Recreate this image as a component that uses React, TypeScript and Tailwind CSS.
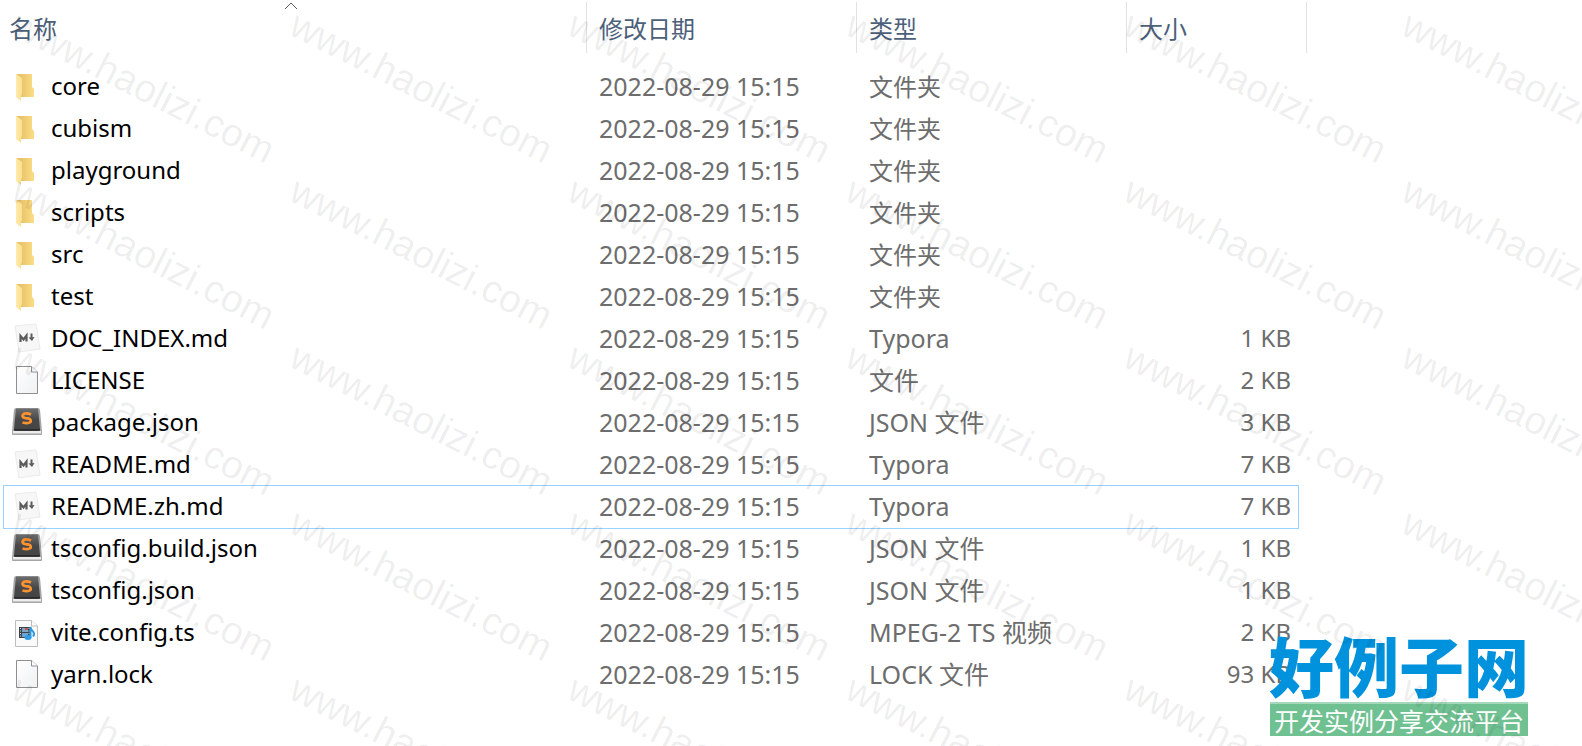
import React, { useState } from 'react';

type Kind = 'folder' | 'markdown' | 'blank' | 'sublime' | 'video';

interface FileEntry {
  name: string;
  kind: Kind;
  date: string;
  type: string;
  size?: string;
}

const DATE = '2022-08-29 15:15';

const FILES: FileEntry[] = [
  { name: 'core', kind: 'folder', date: DATE, type: '文件夹' },
  { name: 'cubism', kind: 'folder', date: DATE, type: '文件夹' },
  { name: 'playground', kind: 'folder', date: DATE, type: '文件夹' },
  { name: 'scripts', kind: 'folder', date: DATE, type: '文件夹' },
  { name: 'src', kind: 'folder', date: DATE, type: '文件夹' },
  { name: 'test', kind: 'folder', date: DATE, type: '文件夹' },
  { name: 'DOC_INDEX.md', kind: 'markdown', date: DATE, type: 'Typora', size: '1 KB' },
  { name: 'LICENSE', kind: 'blank', date: DATE, type: '文件', size: '2 KB' },
  { name: 'package.json', kind: 'sublime', date: DATE, type: 'JSON 文件', size: '3 KB' },
  { name: 'README.md', kind: 'markdown', date: DATE, type: 'Typora', size: '7 KB' },
  { name: 'README.zh.md', kind: 'markdown', date: DATE, type: 'Typora', size: '7 KB' },
  { name: 'tsconfig.build.json', kind: 'sublime', date: DATE, type: 'JSON 文件', size: '1 KB' },
  { name: 'tsconfig.json', kind: 'sublime', date: DATE, type: 'JSON 文件', size: '1 KB' },
  { name: 'vite.config.ts', kind: 'video', date: DATE, type: 'MPEG-2 TS 视频', size: '2 KB' },
  { name: 'yarn.lock', kind: 'blank', date: DATE, type: 'LOCK 文件', size: '93 KB' },
];

const FolderIcon = () => (
  <>
    <path d="M5 3H21V16L23 18V26H10V8Z" fill="url(#folderBack)" />
    <path d="M5 3L11 7V23L10 25V30L5 26Z" fill="url(#folderFront)" />
  </>
);

const PageShape = () => (
  <>
    <path d="M5.5 1.5H20.5L26.5 7V28.5H5.5Z" fill="url(#paper)" stroke="#8f8f8f" />
    <path d="M20.5 1.5V7H26.5" fill="#fff" stroke="#8f8f8f" />
  </>
);

const MarkdownIcon = () => (
  <>
    <path d="M4 3L25 1L29 26L8 29Z" fill="#f7f7f7" stroke="#ebebeb" />
    <path d="M9.5 19V13L12.5 16.5L15.5 12.5V18.5" fill="none" stroke="#5c5c5c" strokeWidth="2.2" />
    <path d="M20.5 10.5V16" fill="none" stroke="#5c5c5c" strokeWidth="2" />
    <path d="M17.5 14.5L23.5 14L21 18Z" fill="#5c5c5c" />
  </>
);

const SublimeIcon = () => (
  <>
    <path d="M5 1H27Q28.5 1 29 3L31 24V27Q31 28 30 28H2Q1 28 1 27V24L3 3Q3.5 1 5 1Z" fill="#a5a5a5" />
    <path d="M2 24H30V26.5H2Z" fill="#ececec" />
    <path d="M5 1.5H27L29 22Q29 24 27.5 24H4.5Q3 24 3 22Z" fill="url(#keycap)" />
    <path d="M3 22H29V23.5H3Z" fill="#2b2b2b" />
    <path
      d="M20 7.5Q16 5.5 13 6.8Q10.5 8.5 12.5 10.5Q14.5 11.5 17.5 11.5Q20.5 12.5 19.5 15Q17 17 11.5 15.5"
      fill="none"
      stroke="#ff922e"
      strokeWidth="2.8"
    />
  </>
);

const VideoIcon = () => (
  <>
    <path d="M4.5 3.5H20.5L26.5 9V29.5H4.5Z" fill="#fafafa" stroke="#bdbdbd" />
    <path d="M20.5 3.5V9H26.5" fill="#fff" stroke="#bdbdbd" />
    <path d="M8 10H19V21H8Z" fill="#3d434b" />
    <path d="M11 11H17V15H11Z" fill="#7fa3c7" />
    <path d="M14 11H17V13H14Z" fill="#c3574c" />
    <path d="M11 16H17V20H11Z" fill="#6aa4d8" />
    <path d="M9.5 11V21M18 11V21" stroke="#d7dce2" strokeDasharray="1 1.5" />
    <ellipse cx="17" cy="20.5" rx="3.5" ry="2.5" fill="#2f9be2" />
    <path d="M19.5 20.5V10Q20 13 22 14.5Q24 17 22 19.5" fill="none" stroke="#2f9be2" strokeWidth="2" />
  </>
);

const ICONS: Record<Kind, React.FC> = {
  folder: FolderIcon,
  blank: PageShape,
  markdown: MarkdownIcon,
  sublime: SublimeIcon,
  video: VideoIcon,
};

const FileIcon = ({ kind }: { kind: Kind }) => {
  const Shape = ICONS[kind];
  return (
    <svg viewBox="0 0 32 32" className="size-8 shrink-0" aria-hidden="true">
      <Shape />
    </svg>
  );
};

// Gradients shared by every file icon
const IconDefs = () => (
  <svg className="absolute size-0" aria-hidden="true">
    <defs>
      <linearGradient id="folderBack">
        <stop offset="0.3" stopColor="#e9c46a" />
        <stop offset="1" stopColor="#fcdd86" />
      </linearGradient>
      <linearGradient id="folderFront">
        <stop offset="0" stopColor="#ffeaa9" />
        <stop offset="1" stopColor="#fbdf90" />
      </linearGradient>
      <linearGradient id="paper" x2="1" y2="1">
        <stop offset="0" stopColor="#ffffff" />
        <stop offset="1" stopColor="#eff1f3" />
      </linearGradient>
      <linearGradient id="keycap" x2="0" y2="1">
        <stop offset="0" stopColor="#6d6d6d" />
        <stop offset="0.5" stopColor="#484848" />
        <stop offset="1" stopColor="#444444" />
      </linearGradient>
    </defs>
  </svg>
);

const Watermark = () => (
  <div className="pointer-events-none absolute inset-0 overflow-hidden" aria-hidden="true">
    <div className="grid w-max grid-cols-[repeat(6,278px)] auto-rows-[166px]">
      {Array.from({ length: 30 }, (_, i) => (
        <div key={i} className="pt-1 pl-6">
          <span className="block w-max origin-top-left rotate-27 font-['Liberation_Sans'] text-[39px] leading-10 text-black/7">
            www.haolizi.com
          </span>
        </div>
      ))}
    </div>
  </div>
);

const SiteLogo = () => (
  <div className="absolute right-[54px] bottom-[10px] w-[258px] font-['Noto_Sans_CJK_SC',sans-serif]">
    <div className="mb-1 flex justify-center text-[65px] leading-[68px] font-black whitespace-nowrap text-[#0092dd]">
      好例子网
    </div>
    <div className="flex h-[34px] justify-center border-t-2 border-[#a5d8bb] bg-[#70c192] text-[25px] leading-8 whitespace-nowrap text-white">
      开发实例分享交流平台
    </div>
  </div>
);

const Separator = ({ last }: { last?: boolean }) => (
  <span
    className={
      last
        ? 'absolute top-0.5 -right-[9px] h-[51px] w-px bg-[#e2e2e2]'
        : 'absolute top-0.5 right-0 h-[51px] w-px bg-[#e2e2e2]'
    }
  />
);

export default function App() {
  const [focused, setFocused] = useState('README.zh.md');

  return (
    <main className="relative min-h-screen overflow-hidden bg-white font-['Noto_Sans','Noto_Sans_CJK_SC',sans-serif]">
      <IconDefs />
      <div className="px-1">
        <table className="w-[1294px] table-fixed border-separate border-spacing-0 text-left">
          <colgroup>
            <col className="w-[583px]" />
            <col className="w-[270px]" />
            <col className="w-[270px]" />
            <col className="w-[171px]" />
          </colgroup>
          <thead>
            <tr className="h-[66px] align-top text-2xl leading-[58px] text-[#4c607a]">
              <th className="relative p-0 pl-[5px] font-normal" aria-sort="ascending">
                名称
                <svg viewBox="0 0 14 8" className="absolute top-0.5 left-[280px] h-2 w-3.5" aria-hidden="true">
                  <path d="M1 7L7 1L13 7" fill="none" stroke="#5a5a5a" />
                </svg>
                <Separator />
              </th>
              <th className="relative p-0 pl-3 font-normal">
                修改日期
                <Separator />
              </th>
              <th className="relative p-0 pl-3 font-normal">
                类型
                <Separator />
              </th>
              <th className="relative p-0 pl-3 font-normal">
                大小
                <Separator last />
              </th>
            </tr>
          </thead>
          <tbody>
            {FILES.map(file => (
              <tr
                key={file.name}
                onClick={() => setFocused(file.name)}
                className={
                  focused === file.name
                    ? 'h-[42px] text-2xl leading-10 text-[#6d6d6d] outline outline-[#99d1ff]'
                    : 'h-[42px] text-2xl leading-10 text-[#6d6d6d]'
                }
              >
                <td className="p-0 pl-[7px] text-black">
                  <div className="flex h-[42px] items-center gap-2">
                    <FileIcon kind={file.kind} />
                    <span className="pb-0.5">{file.name}</span>
                  </div>
                </td>
                <td className="p-0 pb-0.5 pl-3 text-[25px] leading-10">{file.date}</td>
                <td className={file.kind === 'folder' ? 'p-0 pl-3' : 'p-0 pb-0.5 pl-3 text-[25px] leading-10'}>
                  {file.type}
                </td>
                <td className="p-0 pr-[7px] pb-0.5 text-right">{file.size}</td>
              </tr>
            ))}
          </tbody>
        </table>
      </div>
      <SiteLogo />
      <Watermark />
    </main>
  );
}
